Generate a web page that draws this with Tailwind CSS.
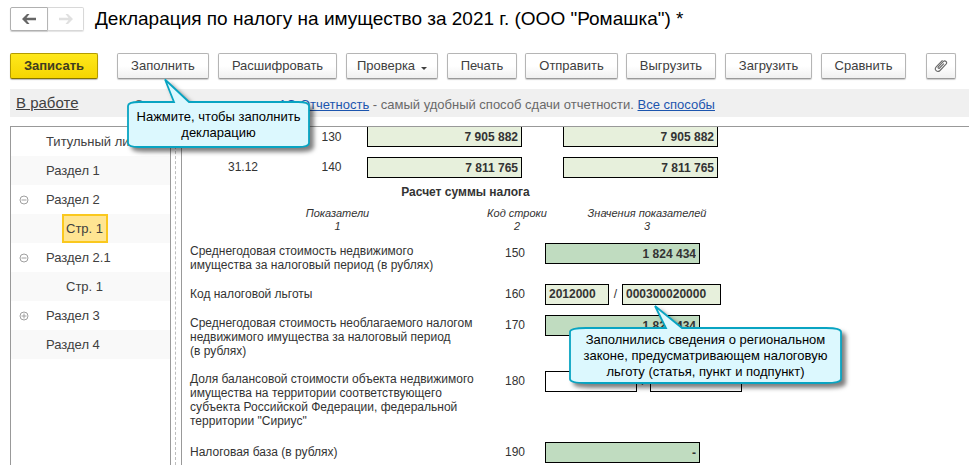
<!DOCTYPE html>
<html lang="ru">
<head>
<meta charset="utf-8">
<title>Декларация по налогу на имущество</title>
<script src="https://cdn.jsdelivr.net/npm/@tailwindcss/browser@4"></script>
</head>
<body class="relative flex h-screen flex-col overflow-hidden bg-white font-['Liberation_Sans',Arial,sans-serif] text-[13px] text-[#404040]">
<header class="flex h-[38px] shrink-0 items-center gap-[11px] pl-[10px]">
  <nav class="flex h-6 shrink-0" aria-label="История">
    <button class="flex w-[38px] items-center justify-center rounded-l-[2px] border border-[#b0b0b0] shadow-[0_1px_1px_#ccc]" aria-label="Назад">
      <svg width="14" height="10" viewBox="0 0 14 10"><path d="M0 5 5 0h2.500L4.500 3.800H14v2.400H4.500L7.500 10H5z" fill="#666"/></svg>
    </button>
    <button class="flex w-9 items-center justify-center rounded-r-[2px] border border-l-0 border-[#d8d8d8] shadow-[0_1px_1px_#e4e4e4]" aria-label="Вперед">
      <svg width="14" height="10" viewBox="0 0 14 10"><path d="M14 5 9 0H6.500l3 3.800H0v2.400h9.500l-3 3.800H9z" fill="#e0e0e0"/></svg>
    </button>
  </nav>
  <h1 class="whitespace-nowrap text-[19px] leading-6 text-black">Декларация по налогу на имущество за 2021 г. (ООО "Ромашка") *</h1>
</header>

<div class="mt-[15px] flex h-[26px] shrink-0 whitespace-nowrap pl-[10px]" role="toolbar">
  <button class="mr-[19px] w-[88px] rounded-[2px] border border-[#b39b00] border-b-[#857300] bg-linear-to-b from-[#ffe81a] to-[#f5d500] font-bold text-[#403c20] shadow-[0_1px_1px_#bbb]">Записать</button>
  <button class="mr-[9px] w-[92px] rounded-[2px] border border-[#b5b5b5] border-b-[#999] bg-linear-to-b from-white from-50% to-[#f0f0f0] shadow-[0_1px_1px_#ccc]">Заполнить</button>
  <button class="mr-[9px] w-[119px] rounded-[2px] border border-[#b5b5b5] border-b-[#999] bg-linear-to-b from-white from-50% to-[#f0f0f0] shadow-[0_1px_1px_#ccc]">Расшифровать</button>
  <button class="mr-[9px] flex w-[92px] items-center justify-center gap-[6px] rounded-[2px] border border-[#b5b5b5] border-b-[#999] bg-linear-to-b from-white from-50% to-[#f0f0f0] shadow-[0_1px_1px_#ccc]">Проверка<svg class="mt-1" width="6" height="3" viewBox="0 0 6 3"><path d="M0 0h6L3 3z" fill="#404040"/></svg></button>
  <button class="mr-[8px] w-[70px] rounded-[2px] border border-[#b5b5b5] border-b-[#999] bg-linear-to-b from-white from-50% to-[#f0f0f0] shadow-[0_1px_1px_#ccc]">Печать</button>
  <button class="mr-[8px] w-[93px] rounded-[2px] border border-[#b5b5b5] border-b-[#999] bg-linear-to-b from-white from-50% to-[#f0f0f0] shadow-[0_1px_1px_#ccc]">Отправить</button>
  <button class="mr-[9px] w-[90px] rounded-[2px] border border-[#b5b5b5] border-b-[#999] bg-linear-to-b from-white from-50% to-[#f0f0f0] shadow-[0_1px_1px_#ccc]">Выгрузить</button>
  <button class="mr-[9px] w-[87px] rounded-[2px] border border-[#b5b5b5] border-b-[#999] bg-linear-to-b from-white from-50% to-[#f0f0f0] shadow-[0_1px_1px_#ccc]">Загрузить</button>
  <button class="mr-[20px] w-[85px] rounded-[2px] border border-[#b5b5b5] border-b-[#999] bg-linear-to-b from-white from-50% to-[#f0f0f0] shadow-[0_1px_1px_#ccc]">Сравнить</button>
  <button class="flex w-[30px] items-center justify-center rounded-[2px] border border-[#b5b5b5] border-b-[#999] bg-linear-to-b from-white from-50% to-[#f0f0f0] shadow-[0_1px_1px_#ccc]" aria-label="Присоединенные файлы">
    <svg width="14" height="14" viewBox="0 0 14 14" fill="none" stroke="#6a6a6a" stroke-width="1.100" stroke-linecap="round"><path d="M9.600 4.800 5.600 9c-.9.900-2.200-.2-1.300-1.200l4.900-5.200c1.900-1.800 4.600.6 2.800 2.600l-6 6.300c-2.600 2.500-6.300-.8-3.800-3.600l6-6.200"/></svg>
  </button>
</div>

<div class="ml-[10px] mt-[10px] flex h-7 shrink-0 items-center whitespace-nowrap bg-[#f0f0f0] pl-[6px] text-[#696969]">
  <a href="#" class="w-[118px] text-[15px] text-[#404040] underline">В работе</a>
  <span class="w-[145px] pt-[3px]">Сервис</span>
  <p class="pt-[3px]"><a href="#" class="text-[#1c55ae] underline">1С-Отчетность</a> - самый удобный способ сдачи отчетности. <a href="#" class="text-[#1c55ae] underline">Все способы</a></p>
</div>

<div class="ml-[10px] mt-[9px] flex min-h-0 flex-1">
  <aside class="w-[161px] shrink-0 border border-b-0 border-[#999]">
    <ul class="text-[13px] leading-[29px]">
      <li class="pl-[35px]">Титульный лист</li>
      <li class="bg-[#f9f9f9] pl-[35px]">Раздел 1</li>
      <li class="flex items-center pl-2"><button class="w-[27px]" aria-label="Свернуть"><svg width="10" height="10" viewBox="0 0 10 10" fill="none" stroke="#a0a0a0"><circle cx="5" cy="5" r="4"/><path d="M2.500 5h5"/></svg></button>Раздел 2</li>
      <li class="flex bg-[#f9f9f9] pl-[51px]"><span class="w-[46px] border-2 border-[#fac81e] bg-[#ffe592] px-[2px] leading-[25px]">Стр. 1</span></li>
      <li class="flex items-center pl-2"><button class="w-[27px]" aria-label="Свернуть"><svg width="10" height="10" viewBox="0 0 10 10" fill="none" stroke="#a0a0a0"><circle cx="5" cy="5" r="4"/><path d="M2.500 5h5"/></svg></button>Раздел 2.1</li>
      <li class="bg-[#f9f9f9] pl-[55px]">Стр. 1</li>
      <li class="flex items-center pl-2"><button class="w-[27px]" aria-label="Развернуть"><svg width="10" height="10" viewBox="0 0 10 10" fill="none" stroke="#a0a0a0"><circle cx="5" cy="5" r="4"/><path d="M2.500 5h5M5 2.500v5"/></svg></button>Раздел 3</li>
      <li class="bg-[#f9f9f9] pl-[35px]">Раздел 4</li>
    </ul>
  </aside>
  <div class="w-[10px] shrink-0 pl-1"><div class="h-full border-l border-dashed border-[#bdbdbd]"></div></div>
  <main class="min-w-0 flex-1 overflow-hidden border-l border-t border-[#999] pl-2 text-[12px] leading-[14px] text-[#333]">
    <table class="w-[528px] table-fixed text-center">
      <colgroup><col class="w-[106px]"><col class="w-[71px]"><col class="w-[196px]"><col class="w-[155px]"></colgroup>
      <tr class="h-[30px] align-top">
        <td></td><td class="leading-5">130</td>
        <td><input aria-label="130, графа 3" value="7 905 882" class="block h-5 w-[155px] border border-t-0 border-black bg-[#e7f0dc] pr-[3px] text-right font-bold"></td>
        <td><input aria-label="130, графа 4" value="7 905 882" class="block h-5 w-[155px] border border-t-0 border-black bg-[#e7f0dc] pr-[3px] text-right font-bold"></td>
      </tr>
      <tr class="h-[21px] align-top">
        <td class="leading-[21px]">31.12</td><td class="leading-[21px]">140</td>
        <td><input aria-label="140, графа 3" value="7 811 765" class="block h-[21px] w-[155px] border border-black bg-[#e7f0dc] pr-[3px] text-right font-bold"></td>
        <td><input aria-label="140, графа 4" value="7 811 765" class="block h-[21px] w-[155px] border border-black bg-[#e7f0dc] pr-[3px] text-right font-bold"></td>
      </tr>
    </table>
    <table class="w-[559px] table-fixed">
      <caption class="h-[28px] pr-2 text-[12px] font-bold leading-[28px]">Расчет суммы налога</caption>
      <colgroup><col class="w-[295px]"><col class="w-[60px]"><col class="w-[204px]"></colgroup>
      <thead>
        <tr class="h-[37px] whitespace-nowrap align-top text-[11px] italic leading-[13px]">
          <th class="pt-px font-normal">Показатели<br>1</th>
          <th class="pt-px font-normal"><div class="-ml-1 -mr-2">Код строки<br>2</div></th>
          <th class="pt-px font-normal">Значения показателей<br>3</th>
        </tr>
      </thead>
      <tbody class="align-top">
        <tr class="h-[41px]">
          <td class="pt-px"><label for="f150">Среднегодовая стоимость недвижимого<br>имущества за налоговый период (в рублях)</label></td>
          <td class="text-center leading-[21px]">150</td>
          <td><input id="f150" value="1 824 434" class="block h-[21px] w-[155px] border border-black bg-[#c0dcc0] pr-[3px] text-right font-bold"></td>
        </tr>
        <tr class="h-[31px]">
          <td class="leading-[21px]"><label for="f160">Код налоговой льготы</label></td>
          <td class="text-center leading-[21px]">160</td>
          <td><div class="flex leading-[21px]"><input id="f160" value="2012000" class="h-[21px] w-16 border border-black bg-[#e7f0dc] pl-[3px] font-bold"><span class="w-[13px] text-center">/</span><input aria-label="160, основание" value="000300020000" class="h-[21px] w-[99px] border border-black bg-[#e7f0dc] pl-[3px] font-bold"></div></td>
        </tr>
        <tr class="h-[56px]">
          <td class="pt-px"><label for="f170">Среднегодовая стоимость необлагаемого налогом<br>недвижимого имущества за налоговый период<br>(в рублях)</label></td>
          <td class="text-center leading-[21px]">170</td>
          <td><input id="f170" value="1 824 434" class="block h-[21px] w-[155px] border border-black bg-[#c0dcc0] pr-[3px] text-right font-bold"></td>
        </tr>
        <tr class="h-[71px]">
          <td class="pt-px"><label for="f180">Доля балансовой стоимости объекта недвижимого<br>имущества на территории соответствующего<br>субъекта Российской Федерации, федеральной<br>территории "Сириус"</label></td>
          <td class="text-center leading-[21px]">180</td>
          <td><div class="flex leading-[21px]"><input id="f180" class="h-[21px] w-[92px] border border-black"><span class="w-[13px] text-center">/</span><input aria-label="180, знаменатель" class="h-[21px] w-[92px] border border-black"></div></td>
        </tr>
        <tr class="h-[21px]">
          <td class="leading-[21px]"><label for="f190">Налоговая база (в рублях)</label></td>
          <td class="text-center leading-[21px]">190</td>
          <td><input id="f190" value="-" class="block h-[21px] w-[155px] border border-black bg-[#c0dcc0] pr-[3px] text-right font-bold"></td>
        </tr>
      </tbody>
    </table>
  </main>
</div>

<div class="absolute left-[126px] top-[78px] h-[71px] w-[185px] pt-[31px] text-center leading-4 text-black">
  <svg class="absolute left-0 top-0 overflow-visible drop-shadow-[4px_4px_2px_rgba(0,0,0,0.5)]" width="185" height="71" viewBox="0 0 185 71"><path d="M13 24H48L39 1.500 63 24H172Q183 24 183 28V65Q183 69 172 69H13Q2 69 2 65V28Q2 24 13 24Z" fill="#dcf8fe" stroke="#08a4c2" stroke-width="1.800"/></svg>
  <p class="relative">Нажмите, чтобы заполнить<br>декларацию</p>
</div>
<div class="absolute left-[568px] top-[304px] h-[81px] w-[275px] pt-[28px] text-center leading-4 text-black">
  <svg class="absolute left-0 top-0 overflow-visible drop-shadow-[4px_4px_2px_rgba(0,0,0,0.5)]" width="275" height="81" viewBox="0 0 275 81"><path d="M18 24H98L87 2 114 24H258Q273 24 273 28V75Q273 79 258 79H18Q2 79 2 75V28Q2 24 18 24Z" fill="#dcf8fe" stroke="#08a4c2" stroke-width="1.800"/></svg>
  <p class="relative">Заполнились сведения о региональном<br>законе, предусматривающем налоговую<br>льготу (статья, пункт и подпункт)</p>
</div>
</body>
</html>
